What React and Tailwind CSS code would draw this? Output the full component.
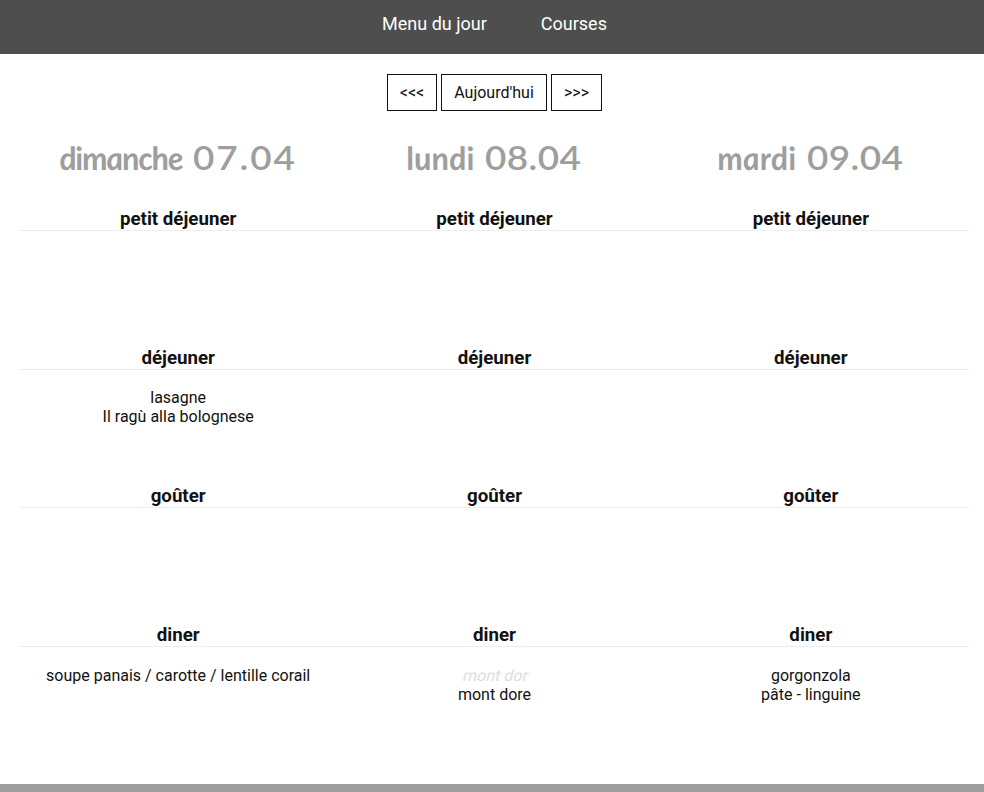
const days = [
  {
    name: "dimanche",
    date: "07.04",
    nameClass: "inline-block w-[124px] origin-bottom-left skew-x-[7deg] pl-[5px] text-left italic tracking-[-1.1px]",
    dateClass: "inline-block w-[104px] origin-left scale-x-[1.15] text-left font-semibold tracking-[1.7px]",
    meals: [[], ["lasagne", "Il ragù alla bolognese"], [], ["soupe panais / carotte / lentille corail"]],
  },
  {
    name: "lundi",
    date: "08.04",
    nameClass: "inline-block w-[69px] origin-bottom-left skew-x-[7deg] pl-[5px] text-left italic tracking-[0.2px]",
    dateClass: "inline-block w-[97px] origin-left scale-x-[1.15] text-left font-semibold tracking-[0.4px]",
    meals: [[], [], [], ["mont dor", "mont dore"]],
    faded: "mont dor",
  },
  {
    name: "mardi",
    date: "09.04",
    nameClass: "inline-block w-[79px] origin-bottom-left skew-x-[7deg] pl-[4px] text-left italic tracking-[0.2px]",
    dateClass: "inline-block w-[97px] origin-left scale-x-[1.15] text-left font-semibold tracking-[0.4px]",
    meals: [[], [], [], ["gorgonzola", "pâte - linguine"]],
  },
];

const mealNames = ["petit déjeuner", "déjeuner", "goûter", "diner"];

function Day({ day }) {
  return (
    <section className="flex-1 text-center">
      <h2 className="mb-[9px] flex h-[60px] justify-center gap-2.5 whitespace-nowrap font-['Lato',sans-serif] text-[32px] leading-[38px] font-bold text-[#9e9e9e]">
        <span className={day.nameClass}>{day.name}</span>
        <span className={day.dateClass}>{day.date}</span>
      </h2>
      {mealNames.map((meal, i) => (
        <div key={meal} className="h-[138.67px]">
          <h3 className="h-[23px] border-b border-[#eeeeee] text-[18.72px] leading-[22px] font-bold">{meal}</h3>
          <ul className="pt-[18.6px] leading-[19px]">
            {day.meals[i].map((dish) => (
              <li key={dish}>
                <span className={dish === day.faded ? "inline-block origin-[50%_80%] skew-x-[-14deg] text-[#dddddd]" : ""}>{dish}</span>
              </li>
            ))}
          </ul>
        </div>
      ))}
    </section>
  );
}

export default function App() {
  return (
    <div className="flex h-[792px] flex-col overflow-hidden bg-white font-['Roboto',sans-serif] text-base text-[#111111]">
      <nav className="flex h-[54px] shrink-0 justify-center gap-[54px] pt-3 pl-[5px] text-lg leading-6 text-white bg-[#4e4e4e]">
        <a>Menu du jour</a>
        <a>Courses</a>
      </nav>
      <div className="mt-5 flex h-[37px] shrink-0 justify-center gap-1 pl-[5px]">
        <button className="w-[50px] border border-[#111111]">{"<<<"}</button>
        <button className="w-[106px] border border-[#111111]">Aujourd'hui</button>
        <button className="w-[51px] border border-[#111111]">{">>>"}</button>
      </div>
      <main className="mt-7 ml-5 flex h-[645px] w-[949px] shrink-0">
        {days.map((day) => (
          <Day key={day.name} day={day} />
        ))}
      </main>
      <footer className="h-2 shrink-0 bg-[#9e9e9e]" />
    </div>
  );
}
